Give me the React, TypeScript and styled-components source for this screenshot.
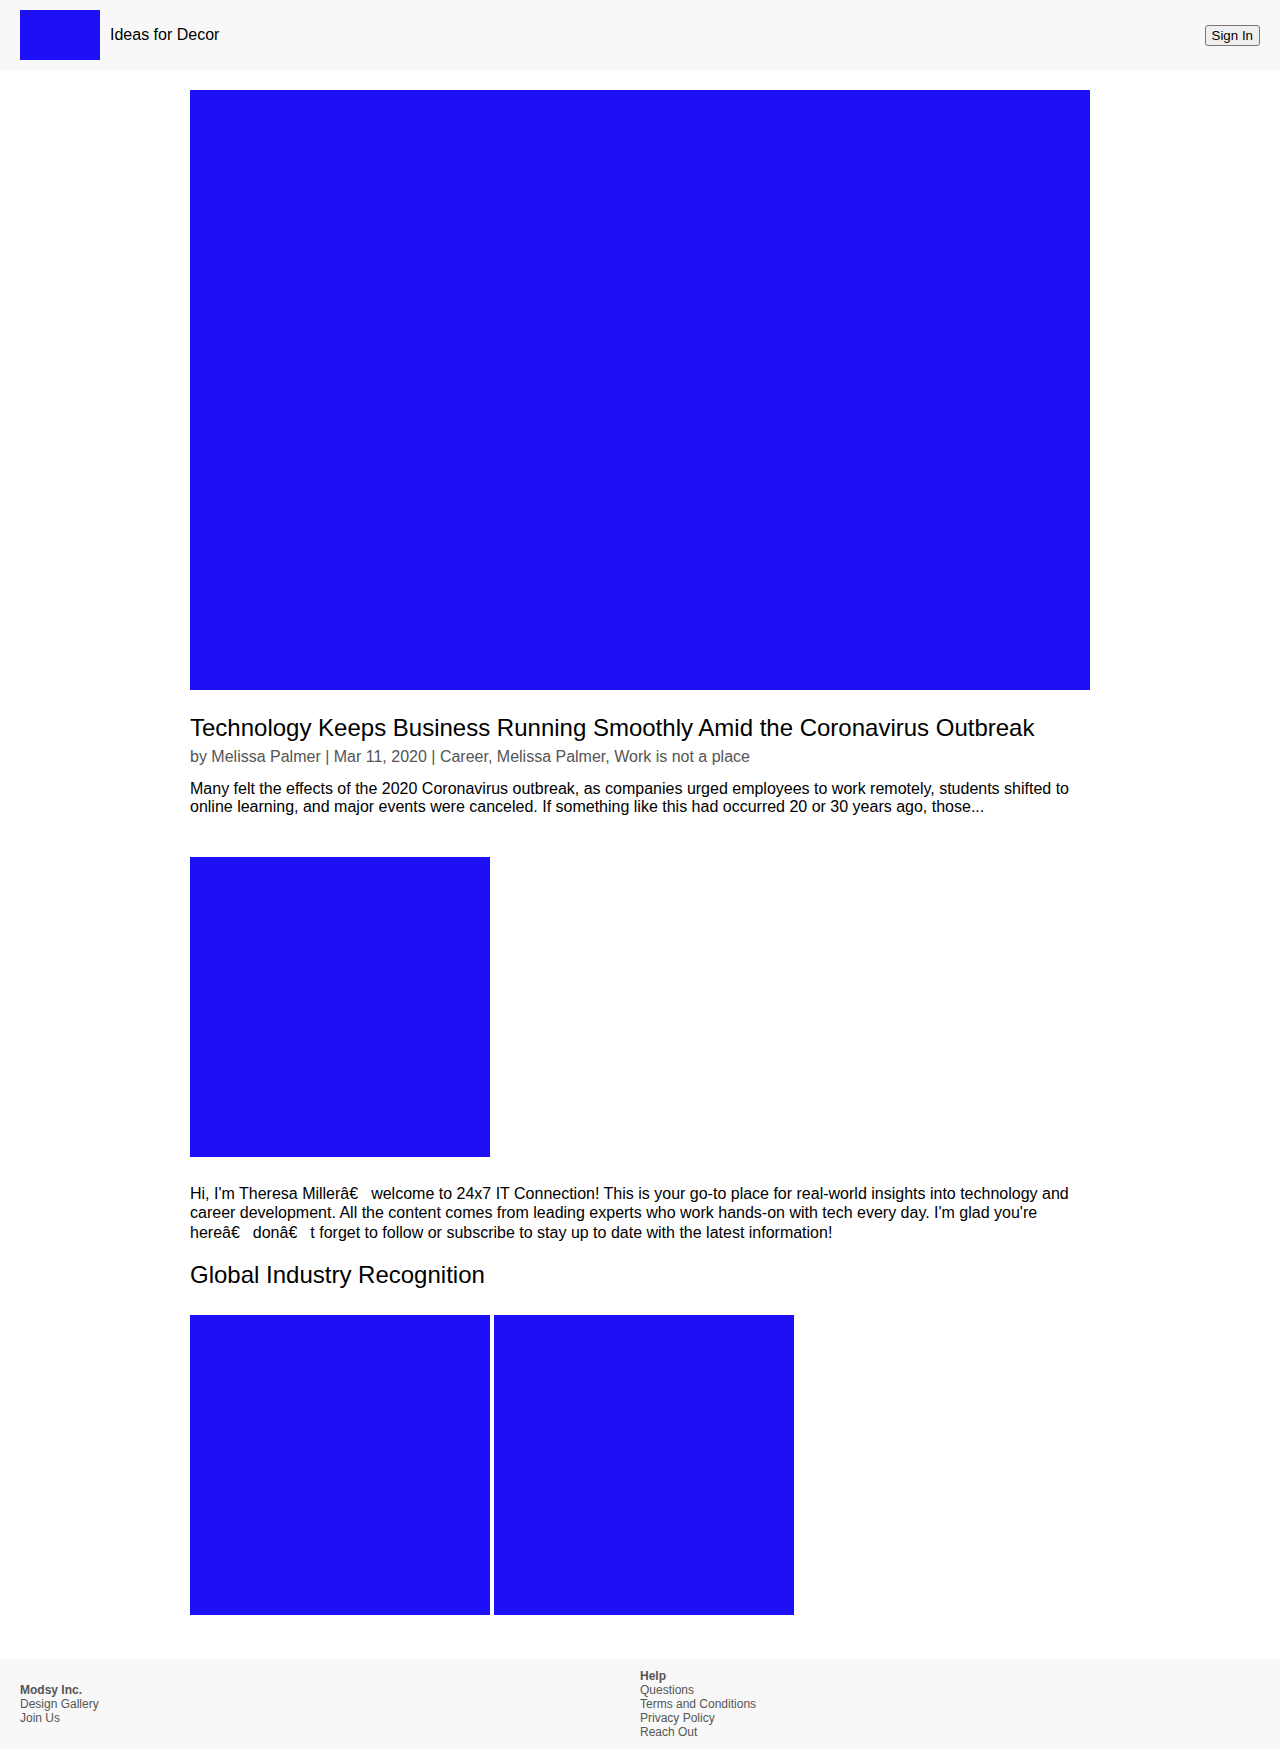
import React from "react"
import styled, { createGlobalStyle } from "styled-components"

const GlobalStyle = createGlobalStyle`
  body {
    margin: 0;
    font-family: "Liberation Sans", Arial, sans-serif;
    color: #000;
    background: #fff;
  }
`

const blue = "#1d10f7"

const Header = styled.header`
  display: flex;
  align-items: center;
  justify-content: space-between;
  height: 70px;
  padding: 0 20px;
  background-color: #f8f8f8;
`

const Brand = styled.div`
  display: flex;
  align-items: center;
`

const Logo = styled.div`
  width: 80px;
  height: 50px;
  background-color: ${blue};
`

const BrandName = styled.span`
  margin-left: 10px;
  font-size: 16px;
`

const SignIn = styled.button`
  font-family: "Liberation Sans", Arial, sans-serif;
  font-size: 13.33px;
  height: 21px;
  padding: 0 6px;
  color: #000;
  background-color: #efefef;
  border: 1px solid #767676;
  border-radius: 3px;
`

const Main = styled.main`
  width: 900px;
  margin: 20px auto 0;
  padding-bottom: 44px;
`

const Picture = styled.div<{ $w: number; $h: number }>`
  width: ${(p) => p.$w}px;
  height: ${(p) => p.$h}px;
  background-color: ${blue};
  flex: none;
`

const Title = styled.h2`
  margin: 24px 0 0;
  font-size: 24px;
  font-weight: normal;
`

const Meta = styled.p`
  margin: 6px 0 0;
  font-size: 16px;
  color: #555;
`

const Text = styled.p<{ $top: number }>`
  margin: ${(p) => p.$top}px 0 0;
  font-size: 16px;
`

const Article = styled.article`
  margin-bottom: 41px;
`

const Heading = styled.h2`
  margin: 18px 0 26px;
  font-size: 24px;
  font-weight: normal;
`

const Gallery = styled.div`
  display: flex;
  gap: 4px;
`

const Footer = styled.footer`
  display: flex;
  align-items: center;
  height: 90px;
  padding: 0 20px;
  background-color: #f8f8f8;
  font-size: 12px;
  color: #555;
`

const FooterColumn = styled.div`
  flex: 1;
`

const FooterTitle = styled.div`
  font-weight: bold;
`

const FooterLink = styled.div``

const columns = [
  { title: "Modsy Inc.", links: ["Design Gallery", "Join Us"] },
  { title: "Help", links: ["Questions", "Terms and Conditions", "Privacy Policy", "Reach Out"] },
]

// mojibake kept as in the source page: "â€" followed by a control char
const bad = "\u00e2\u20ac\u0099"

const App = () => {
  return (
    <>
      <GlobalStyle />
      <Header>
        <Brand>
          <Logo />
          <BrandName>Ideas for Decor</BrandName>
        </Brand>
        <SignIn>Sign In</SignIn>
      </Header>
      <Main>
        <Article>
          <Picture $w={900} $h={600} />
          <Title>Technology Keeps Business Running Smoothly Amid the Coronavirus Outbreak</Title>
          <Meta>by Melissa Palmer | Mar 11, 2020 | Career, Melissa Palmer, Work is not a place</Meta>
          <Text $top={14}>
            Many felt the effects of the 2020 Coronavirus outbreak, as companies urged employees to work
            remotely, students shifted to online learning, and major events were canceled. If something like
            this had occurred 20 or 30 years ago, those...
          </Text>
        </Article>
        <Picture $w={300} $h={300} />
        <Text $top={26}>
          {`Hi, I'm Theresa Miller${bad}welcome to 24x7 IT Connection! This is your go-to place for real-world insights into technology and career development. All the content comes from leading experts who work hands-on with tech every day. I'm glad you're here${bad}don${bad}t forget to follow or subscribe to stay up to date with the latest information!`}
        </Text>
        <Heading>Global Industry Recognition</Heading>
        <Gallery>
          <Picture $w={300} $h={300} />
          <Picture $w={300} $h={300} />
        </Gallery>
      </Main>
      <Footer>
        {columns.map((col) => (
          <FooterColumn key={col.title}>
            <FooterTitle>{col.title}</FooterTitle>
            {col.links.map((link) => (
              <FooterLink key={link}>{link}</FooterLink>
            ))}
          </FooterColumn>
        ))}
      </Footer>
    </>
  )
}

export default App
